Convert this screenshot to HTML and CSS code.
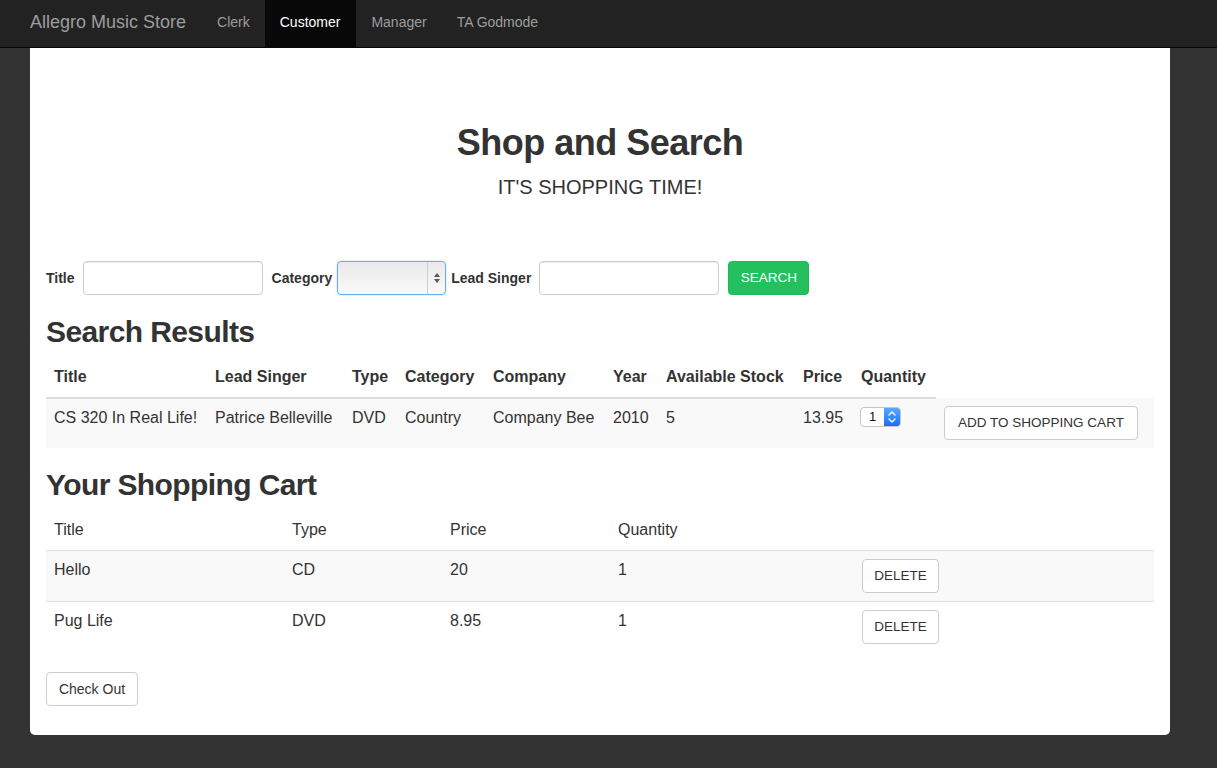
FILE: index.html
```html
<!DOCTYPE html>
<html lang="en">
<head>
<meta charset="utf-8">
<title>Allegro Music Store</title>
<link rel="stylesheet" href="styles.css">
</head>
<body>
<nav class="navbar">
  <a class="brand">Allegro Music Store</a>
  <ul class="nav">
    <li><a>Clerk</a></li>
    <li class="active"><a>Customer</a></li>
    <li><a>Manager</a></li>
    <li><a>TA Godmode</a></li>
  </ul>
</nav>
<main class="container">
  <header class="hero">
    <h1>Shop and Search</h1>
    <p>IT'S SHOPPING TIME!</p>
  </header>

  <form class="search-form">
    <label class="lbl">Title</label>
    <input class="field field-title" type="text">
    <label class="lbl lbl-cat">Category</label>
    <div class="select">
      <span class="select-value"></span>
      <span class="select-arrows">
        <svg width="8" height="12" viewBox="0 0 8 12"><polygon points="4,1 7,5 1,5" fill="#555"/><polygon points="1,7 7,7 4,11" fill="#555"/></svg>
      </span>
    </div>
    <label class="lbl lbl-singer">Lead Singer</label>
    <input class="field field-singer" type="text">
    <button class="btn btn-success" type="button">SEARCH</button>
  </form>

  <h2>Search Results</h2>
  <table class="table results">
    <colgroup>
      <col class="r1"><col class="r2"><col class="r3"><col class="r4"><col class="r5">
      <col class="r6"><col class="r7"><col class="r8"><col class="r9"><col class="r10">
    </colgroup>
    <thead>
      <tr>
        <th>Title</th><th>Lead Singer</th><th>Type</th><th>Category</th><th>Company</th>
        <th>Year</th><th>Available Stock</th><th>Price</th><th>Quantity</th>
      </tr>
    </thead>
    <tbody>
      <tr class="striped">
        <td>CS 320 In Real Life!</td><td>Patrice Belleville</td><td>DVD</td><td>Country</td><td>Company Bee</td>
        <td>2010</td><td>5</td><td>13.95</td>
        <td>
          <div class="qty">
            <span class="qty-value">1</span>
            <span class="qty-btn">
              <svg width="16" height="18" viewBox="0 0 16 18"><path d="M5 7 L8 4 L11 7 M5 11 L8 14 L11 11" fill="none" stroke="#fff" stroke-width="1.4" stroke-linecap="round" stroke-linejoin="round"/></svg>
            </span>
          </div>
        </td>
        <td><button class="btn btn-default" type="button">ADD TO SHOPPING CART</button></td>
      </tr>
    </tbody>
  </table>

  <h2>Your Shopping Cart</h2>
  <table class="table cart">
    <colgroup>
      <col class="c1"><col class="c2"><col class="c3"><col class="c4"><col class="c5">
    </colgroup>
    <thead>
      <tr><th>Title</th><th>Type</th><th>Price</th><th>Quantity</th><th></th></tr>
    </thead>
    <tbody>
      <tr class="striped">
        <td>Hello</td><td>CD</td><td>20</td><td>1</td>
        <td><button class="btn btn-default" type="button">DELETE</button></td>
      </tr>
      <tr>
        <td>Pug Life</td><td>DVD</td><td>8.95</td><td>1</td>
        <td><button class="btn btn-default" type="button">DELETE</button></td>
      </tr>
    </tbody>
  </table>

  <button class="btn btn-default btn-checkout" type="button">Check Out</button>
</main>
</body>
</html>
```

FILE: styles.css
```css
html, body {
  margin: 0;
  padding: 0;
}

body {
  background: #333;
  font-family: "Liberation Sans", Arial, sans-serif;
  font-size: 14px;
  line-height: 20px;
  color: #333;
  min-height: 768px;
}

/* navbar */
.navbar {
  display: flex;
  height: 47px;
  background: #222;
  border-bottom: 1px solid #080808;
  padding-left: 15px;
}

.brand {
  display: block;
  padding: 12px 16px 15px 15px;
  font-size: 18px;
  line-height: 20px;
  color: #9d9d9d;
}

.nav {
  display: flex;
  list-style: none;
  margin: 0;
  padding: 0;
}

.nav a {
  display: block;
  padding: 12px 15px 15px;
  line-height: 20px;
  color: #9d9d9d;
}

.nav .active a {
  background: #080808;
  color: #fff;
  padding-right: 16px;
}

/* container */
.container {
  width: 1108px;
  margin-left: 30px;
  background: #fff;
  padding: 0 16px 29px;
  border-radius: 0 0 5px 5px;
}

.hero {
  padding-top: 75px;
  text-align: center;
}

.hero h1 {
  margin: 0;
  font-size: 36px;
  line-height: 40px;
  font-weight: bold;
  letter-spacing: -0.5px;
}

.hero p {
  margin: 13px 0 0;
  font-size: 20px;
  line-height: 22px;
}

/* search form */
.search-form {
  display: flex;
  align-items: center;
  height: 34px;
  margin: 63px 0 0;
}

.lbl {
  font-weight: bold;
  font-size: 14px;
}

.field {
  box-sizing: border-box;
  height: 34px;
  width: 180px;
  margin: 0 0 0 8px;
  padding: 6px 12px;
  border: 1px solid #ccc;
  border-radius: 4px;
  box-shadow: inset 0 1px 1px rgba(0, 0, 0, 0.075);
  font-family: inherit;
  font-size: 14px;
  background: #fff;
}

.lbl-cat {
  margin-left: 9px;
}

.select {
  box-sizing: border-box;
  display: flex;
  width: 109px;
  height: 34px;
  margin-left: 5px;
  border: 1px solid #66aff0;
  border-radius: 4px;
  background: linear-gradient(#eaeaea, #f9f9f9);
  box-shadow: 0 0 2px rgba(102, 175, 240, 0.6);
}

.select-value {
  flex: 1;
}

.select-arrows {
  width: 17px;
  border-left: 1px solid #cfcfcf;
  display: flex;
  align-items: center;
  justify-content: center;
}

.lbl-singer {
  margin-left: 5px;
}

.btn {
  box-sizing: border-box;
  height: 34px;
  padding: 6px 12px;
  border: 1px solid #ccc;
  border-radius: 4px;
  background: #fff;
  color: #333;
  font-family: inherit;
  font-size: 13.5px;
  line-height: 20px;
  cursor: pointer;
}

.btn-success {
  width: 81px;
  margin-left: 9px;
  background: #22c15e;
  border-color: #20b858;
  color: #fff;
  padding: 6px 0;
}

/* headings */
h2 {
  margin: 20px 0 10px;
  font-size: 30px;
  line-height: 33px;
  font-weight: bold;
  letter-spacing: -0.6px;
}

/* tables */
.table {
  width: 100%;
  border-collapse: collapse;
  border-spacing: 0;
  table-layout: fixed;
  font-size: 16px;
  margin-bottom: 20px;
}

.table th,
.table td {
  padding: 8px;
  line-height: 22.86px;
  text-align: left;
  vertical-align: top;
  white-space: nowrap;
}

.table th {
  border-bottom: 2px solid #ddd;
}

.table .striped {
  background: #f9f9f9;
}

.cart th {
  font-weight: normal;
  border-bottom-width: 1px;
}

.cart tbody tr + tr td {
  border-top: 1px solid #ddd;
}

.r1 { width: 161px; }
.r2 { width: 137px; }
.r3 { width: 53px; }
.r4 { width: 88px; }
.r5 { width: 120px; }
.r6 { width: 53px; }
.r7 { width: 137px; }
.r8 { width: 58px; }
.r9 { width: 83px; }
.r10 { width: 218px; }

.c1 { width: 238px; }
.c2 { width: 158px; }
.c3 { width: 168px; }
.c4 { width: 244px; }
.c5 { width: 300px; }

.results .btn {
  width: 194px;
  padding: 6px 0;
  text-align: center;
}

.cart .btn {
  width: 77px;
  padding: 6px 0;
  text-align: center;
}

/* small native-like select */
.qty {
  box-sizing: border-box;
  display: flex;
  width: 41px;
  height: 20px;
  margin-left: -1px;
  border: 1px solid #c6c6c6;
  border-radius: 4px;
  overflow: hidden;
  background: #fff;
  font-size: 13px;
  line-height: 18px;
}

.qty-value {
  flex: 1;
  padding-left: 8px;
  line-height: 18px;
  color: #111;
}

.qty-btn {
  width: 16px;
  display: flex;
  align-items: center;
  justify-content: center;
  background: linear-gradient(#5ba7ff, #1770f3);
}

.btn-checkout {
  width: 92px;
  font-size: 14px;
  padding: 6px 0;
}
```
